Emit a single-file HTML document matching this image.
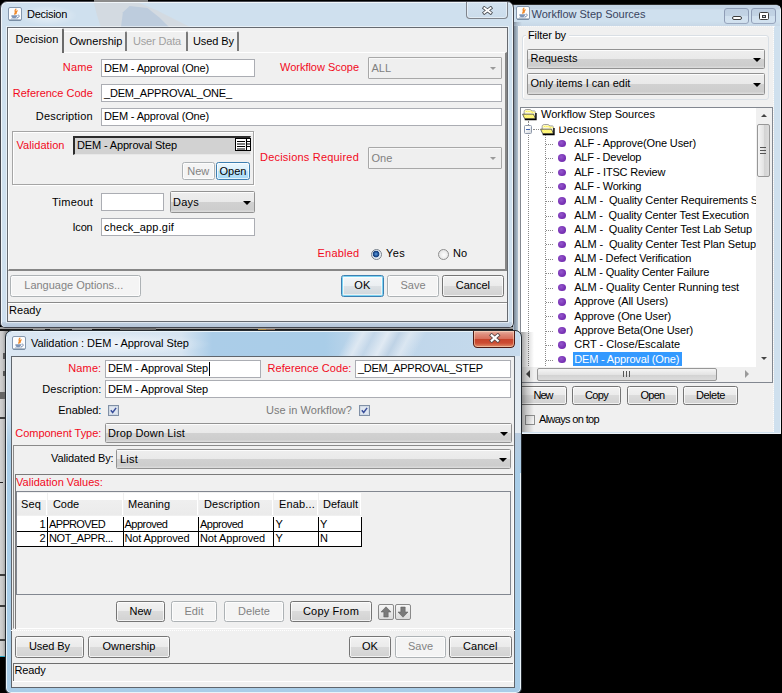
<!DOCTYPE html>
<html lang="en"><head><meta charset="utf-8"><title>Decision</title>
<style>
html,body{margin:0;padding:0}
body{width:782px;height:693px;background:#000;position:relative;overflow:hidden;font-family:"Liberation Sans",sans-serif;font-size:11px}
div,span.t,svg.a{position:absolute}
span.t{white-space:pre}
.btn{box-sizing:border-box;border:1px solid #757575;border-radius:2.5px;background:linear-gradient(#f2f2f2 0,#ebebeb 48%,#dbdbdb 50%,#d2d2d2 100%);box-shadow:inset 0 0 0 1px rgba(255,255,255,.7)}
.btn.cmb{border-color:#929292;border-radius:1.5px;background:linear-gradient(#eeeeee 0,#e9e9e9 48%,#d1d1d1 50%,#cdcdcd 88%,#dedede 100%);box-shadow:inset 0 1px 0 rgba(255,255,255,.8)}
.btn.dis{border-color:#adb2b5;background:#f4f4f4;box-shadow:inset 0 0 0 1px #fcfcfc}
.btn.cdis{border-color:#a8a8a8;border-radius:1px;background:#efefef;box-shadow:inset 1px 1px 0 #f8f8f8}
.btn.def{border-color:#3c7fb1;background:linear-gradient(#f3f6f8 0,#ebeff2 48%,#dde2e6 50%,#cfd6db 100%);box-shadow:inset 0 0 0 1px #7ed4f3,inset 0 0 0 2px rgba(255,255,255,.6)}
.btn.hot{border-color:#3c7fb1;background:linear-gradient(#eaf6fd 0,#d9f0fc 48%,#bee6fd 50%,#a7d9f5 100%);box-shadow:inset 0 0 0 1px rgba(255,255,255,.7)}
.arr{width:0;height:0;border-style:solid;border-width:4px 4px 0 4px;border-color:#000 transparent transparent transparent}
.thumbv{box-sizing:border-box;border:1px solid #979797;border-radius:2px;background:linear-gradient(90deg,#f5f5f5,#e4e4e4 50%,#d2d2d2 52%,#dcdcdc)}
.thumbh{box-sizing:border-box;border:1px solid #979797;border-radius:2px;background:linear-gradient(#f5f5f5,#e4e4e4 50%,#d2d2d2 52%,#dcdcdc)}
</style></head>
<body>
<div style="left:0px;top:329px;width:8px;height:328px;background:linear-gradient(90deg,#d2d2d2 0,#c6c6c6 35%,#9c9c9c 70%,#8a8a8a 100%);"></div>
<div style="left:0px;top:417px;width:6px;height:1.5px;background:#3c3c3c;"></div>
<div style="left:0px;top:574px;width:6px;height:1.5px;background:#3c3c3c;"></div>
<div style="left:0px;top:605px;width:6px;height:1.5px;background:#3c3c3c;"></div>
<div style="left:0px;top:639px;width:6px;height:1.5px;background:#3c3c3c;"></div>
<div style="left:0px;top:481.5px;width:2.5px;height:1.5px;background:#222;"></div>
<div style="left:3px;top:353px;width:2px;height:6px;background:#555;"></div>
<div style="left:2.5px;top:371px;width:2.5px;height:5px;background:#555;"></div>
<div style="left:0px;top:392px;width:5px;height:7px;background:#666;"></div>
<div style="left:0px;top:655.5px;width:6px;height:1.8px;background:#2aa6c4;"></div>
<div style="left:0px;top:327px;width:521px;height:2px;background:#9c9c9c;"></div>
<div style="left:0px;top:329px;width:521px;height:2px;background:#161616;"></div>
<div style="left:33px;top:329px;width:12px;height:2px;background:#8a8a8a;"></div>
<div style="left:50px;top:329px;width:10px;height:2px;background:#777;"></div>
<div style="left:72px;top:329px;width:20px;height:2px;background:#8a8a8a;"></div>
<div style="left:120px;top:328px;width:36px;height:3px;background:#6e6e6e;"></div>
<div style="left:258px;top:328.5px;width:8px;height:2px;background:#b08a3c;"></div>
<div style="left:266px;top:328.5px;width:9px;height:2px;background:#8a6a50;"></div>
<div style="left:473px;top:329px;width:48px;height:2px;background:#161616;"></div>
<div style="left:513px;top:4px;width:268px;height:430px;background:#cfe0ee;border:1px solid #eef3f8;border-top-color:#2a2a2a;border-left-color:#a9b9cb;border-radius:2px 6px 1px 1px;box-sizing:border-box;"></div>
<div style="left:514px;top:5px;width:266px;height:4px;background:#c3d3e4;border-radius:1px 5px 0 0;"></div>
<div style="left:514px;top:9px;width:266px;height:1px;background:#cbdaea;"></div>
<svg class="a" style="left:516px;top:5.5px" width="14" height="14" viewBox="0 0 14 14"><rect x=".5" y=".5" width="13" height="13" rx="1.500" fill="#fcfdfe" stroke="#8598ae"/><path d="M1.200 13h11.600" stroke="#6f839b" stroke-width="1"/><path d="M7.900 2.200c-2.300 1.500.9 2.600-1.300 4.900M9.200 3.900c-1.700.8-.2 1.700-1.500 3" stroke="#f08a2c" stroke-width="1.300" fill="none" stroke-linecap="round"/><path d="M3.300 8.200h5.800c0 2-.9 3-2.900 3s-2.900-1-2.900-3z" fill="#7d94b5"/><path d="M9.500 8.300c1.600-.6 2.400.6 1.400 1.600-.5.500-1.200.8-1.900.9" stroke="#7088ab" stroke-width=".9" fill="none"/><path d="M3 11.900h6.600" stroke="#93a6c0" stroke-width=".8"/></svg>
<span class="t" style="left:531.50px;top:8.99px;font-size:11px;line-height:11px;color:#39445e;letter-spacing:-0.008px;">Workflow Step Sources</span>
<div style="left:724px;top:8px;width:25px;height:16px;background:linear-gradient(#bfd0e2 0,#c2d3e4 48%,#d0e0ee 50%,#d3e2f0);border:1px solid #8f9db6;border-radius:3px;box-sizing:border-box;"></div>
<div style="left:751px;top:8px;width:25px;height:16px;background:linear-gradient(#bfd0e2 0,#c2d3e4 48%,#d0e0ee 50%,#d3e2f0);border:1px solid #8f9db6;border-radius:3px;box-sizing:border-box;"></div>
<div style="left:732px;top:16px;width:10px;height:4px;background:#fff;border:1px solid #3c3c3c;box-sizing:border-box;border-radius:2px;"></div>
<div style="left:759px;top:12px;width:10px;height:8px;background:#fff;border:1px solid #3c3c3c;box-sizing:border-box;border-radius:1.5px;"></div>
<div style="left:762px;top:15px;width:4px;height:3px;background:#c8d4e0;border:1px solid #3c3c3c;box-sizing:border-box;"></div>
<div style="left:514px;top:22px;width:8px;height:410px;background:linear-gradient(90deg,rgba(40,50,65,.5),rgba(40,50,65,.22) 40%,rgba(40,50,65,0));"></div>
<div style="left:518px;top:26px;width:255.5px;height:406px;background:#f0f0f0;border-right:1px dotted rgba(255,255,255,.8);box-sizing:border-box;"></div>
<div style="left:518px;top:26px;width:256.5px;height:1px;border-top:1px dotted rgba(255,255,255,.6);"></div>
<div style="left:514px;top:21px;width:266px;height:5px;background:linear-gradient(rgba(190,205,222,0),rgba(190,205,222,.45));"></div>
<div style="left:522px;top:35px;width:247px;height:65px;border:1px solid #d9dfe5;border-radius:3px;box-sizing:border-box;box-shadow:inset 1px 1px 0 #fff;"></div>
<div style="left:526px;top:31px;width:43px;height:10px;background:#f0f0f0;"></div>
<span class="t" style="left:528.00px;top:29.89px;font-size:11px;line-height:11px;color:#000;letter-spacing:-0.125px;">Filter by</span>
<div class="btn cmb" style="left:527px;top:48.5px;width:238px;height:20.5px;"></div>
<span class="t" style="left:530.50px;top:53.34px;font-size:11px;line-height:11px;color:#000;letter-spacing:0.062px;">Requests</span>
<div class="arr" style="left:752.5px;top:57.5px;border-width:4.500px 4px 0 4px;border-top-color:#000"></div>
<div class="btn cmb" style="left:527px;top:73px;width:238px;height:21.5px;"></div>
<span class="t" style="left:530.50px;top:78.34px;font-size:11px;line-height:11px;color:#000;letter-spacing:0.013px;">Only items I can edit</span>
<div class="arr" style="left:752.5px;top:82.5px;border-width:4.500px 4px 0 4px;border-top-color:#000"></div>
<div style="left:520px;top:106.5px;width:253px;height:276px;background:#fff;border:1px solid #828790;box-sizing:border-box;"></div>
<svg class="a" style="left:0;top:0" width="0" height="0"><defs><pattern id="dth" width="2" height="2" patternUnits="userSpaceOnUse"><rect width="2" height="2" fill="#fffef0"/><rect width="1" height="1" fill="#ffee00"/><rect x="1" y="1" width="1" height="1" fill="#ffee00"/></pattern></defs></svg>
<svg class="a" style="left:522.2px;top:109.2px" width="15" height="12.400" viewBox="0 0 16 13"><path d="M2.300 5V2.600C2.300 1.300 3.200.500 4.600.500h3.800c1 0 1.300.700 2 1.500h2.500c1 0 1.400.600 1.400 1.500v6.500H4z" fill="#fffde6" stroke="#7a7a7a" stroke-width=".8"/><path d="M3 2.500h6.500l1 1.200h3" fill="none" stroke="url(#dth)" stroke-width="1.600"/><path d="M.600 5.400h11.700l2 4.900H2.900z" fill="url(#dth)" stroke="#3a3a3a" stroke-width=".8"/><path d="M2.900 11.100h12V4.200" stroke="#000" stroke-width="1.500" fill="none"/></svg>
<span class="t" style="left:541.00px;top:109.09px;font-size:11px;line-height:11px;color:#000;letter-spacing:-0.008px;">Workflow Step Sources</span>
<div style="left:528px;top:121px;width:1px;height:4px;border-left:1px dotted #8a8a8a;"></div>
<div style="left:528px;top:133px;width:1px;height:233px;border-left:1px dotted #8a8a8a;"></div>
<div style="left:524.2px;top:125px;width:7.6px;height:8.6px;background:linear-gradient(135deg,#fff 30%,#d4d8de);border:1px solid #8e98aa;box-sizing:border-box;border-radius:1.5px;"></div>
<div style="left:526px;top:128.9px;width:4px;height:1px;background:#4466b4;"></div>
<div style="left:533px;top:129px;width:6px;height:1px;border-top:1px dotted #8a8a8a;"></div>
<svg class="a" style="left:539.6px;top:123.6px" width="15" height="12.400" viewBox="0 0 16 13"><path d="M2.300 5V2.600C2.300 1.300 3.200.500 4.600.500h3.800c1 0 1.300.700 2 1.500h2.500c1 0 1.400.600 1.400 1.500v6.500H4z" fill="#fffde6" stroke="#7a7a7a" stroke-width=".8"/><path d="M3 2.500h6.500l1 1.200h3" fill="none" stroke="url(#dth)" stroke-width="1.600"/><path d="M.600 5.400h11.700l2 4.900H2.900z" fill="url(#dth)" stroke="#3a3a3a" stroke-width=".8"/><path d="M2.900 11.100h12V4.200" stroke="#000" stroke-width="1.500" fill="none"/></svg>
<span class="t" style="left:558.60px;top:123.89px;font-size:11px;line-height:11px;color:#000;letter-spacing:0.201px;clip-path:inset(2.500px 0 0 0);">Decisions</span>
<div style="left:545px;top:135px;width:1px;height:231px;border-left:1px dotted #8a8a8a;"></div>
<div style="left:546px;top:144px;width:7px;height:1px;border-top:1px dotted #8a8a8a;"></div>
<div style="left:558.3px;top:139.79999999999998px;width:8px;height:7.4px;background:radial-gradient(circle at 40% 38%,#9458cc,#7a34b6 55%,#6a2aa4);border-radius:50%;"></div>
<span class="t" style="left:574.20px;top:137.89px;font-size:11px;line-height:11px;color:#000;letter-spacing:-0.120px;">ALF - Approve(One User)</span>
<div style="left:546px;top:158px;width:7px;height:1px;border-top:1px dotted #8a8a8a;"></div>
<div style="left:558.3px;top:154.2px;width:8px;height:7.4px;background:radial-gradient(circle at 40% 38%,#9458cc,#7a34b6 55%,#6a2aa4);border-radius:50%;"></div>
<span class="t" style="left:574.20px;top:152.29px;font-size:11px;line-height:11px;color:#000;letter-spacing:-0.257px;">ALF - Develop</span>
<div style="left:546px;top:172px;width:7px;height:1px;border-top:1px dotted #8a8a8a;"></div>
<div style="left:558.3px;top:168.6px;width:8px;height:7.4px;background:radial-gradient(circle at 40% 38%,#9458cc,#7a34b6 55%,#6a2aa4);border-radius:50%;"></div>
<span class="t" style="left:574.20px;top:166.69px;font-size:11px;line-height:11px;color:#000;letter-spacing:-0.186px;">ALF - ITSC Review</span>
<div style="left:546px;top:187px;width:7px;height:1px;border-top:1px dotted #8a8a8a;"></div>
<div style="left:558.3px;top:183.0px;width:8px;height:7.4px;background:radial-gradient(circle at 40% 38%,#9458cc,#7a34b6 55%,#6a2aa4);border-radius:50%;"></div>
<span class="t" style="left:574.20px;top:181.09px;font-size:11px;line-height:11px;color:#000;letter-spacing:-0.239px;">ALF - Working</span>
<div style="left:546px;top:201px;width:7px;height:1px;border-top:1px dotted #8a8a8a;"></div>
<div style="left:558.3px;top:197.39999999999998px;width:8px;height:7.4px;background:radial-gradient(circle at 40% 38%,#9458cc,#7a34b6 55%,#6a2aa4);border-radius:50%;"></div>
<span class="t" style="left:574.20px;top:195.49px;font-size:11px;line-height:11px;color:#000;letter-spacing:-0.105px;">ALM -  Quality Center Requirements S</span>
<div style="left:546px;top:216px;width:7px;height:1px;border-top:1px dotted #8a8a8a;"></div>
<div style="left:558.3px;top:211.79999999999998px;width:8px;height:7.4px;background:radial-gradient(circle at 40% 38%,#9458cc,#7a34b6 55%,#6a2aa4);border-radius:50%;"></div>
<span class="t" style="left:574.20px;top:209.89px;font-size:11px;line-height:11px;color:#000;letter-spacing:-0.146px;">ALM -  Quality Center Test Execution</span>
<div style="left:546px;top:230px;width:7px;height:1px;border-top:1px dotted #8a8a8a;"></div>
<div style="left:558.3px;top:226.2px;width:8px;height:7.4px;background:radial-gradient(circle at 40% 38%,#9458cc,#7a34b6 55%,#6a2aa4);border-radius:50%;"></div>
<span class="t" style="left:574.20px;top:224.29px;font-size:11px;line-height:11px;color:#000;letter-spacing:-0.115px;">ALM -  Quality Center Test Lab Setup</span>
<div style="left:546px;top:244px;width:7px;height:1px;border-top:1px dotted #8a8a8a;"></div>
<div style="left:558.3px;top:240.59999999999997px;width:8px;height:7.4px;background:radial-gradient(circle at 40% 38%,#9458cc,#7a34b6 55%,#6a2aa4);border-radius:50%;"></div>
<span class="t" style="left:574.20px;top:238.69px;font-size:11px;line-height:11px;color:#000;letter-spacing:-0.103px;">ALM -  Quality Center Test Plan Setup</span>
<div style="left:546px;top:259px;width:7px;height:1px;border-top:1px dotted #8a8a8a;"></div>
<div style="left:558.3px;top:255.0px;width:8px;height:7.4px;background:radial-gradient(circle at 40% 38%,#9458cc,#7a34b6 55%,#6a2aa4);border-radius:50%;"></div>
<span class="t" style="left:574.20px;top:253.09px;font-size:11px;line-height:11px;color:#000;letter-spacing:-0.164px;">ALM - Defect Verification</span>
<div style="left:546px;top:273px;width:7px;height:1px;border-top:1px dotted #8a8a8a;"></div>
<div style="left:558.3px;top:269.4px;width:8px;height:7.4px;background:radial-gradient(circle at 40% 38%,#9458cc,#7a34b6 55%,#6a2aa4);border-radius:50%;"></div>
<span class="t" style="left:574.20px;top:267.49px;font-size:11px;line-height:11px;color:#000;letter-spacing:-0.158px;">ALM - Quality Center Failure</span>
<div style="left:546px;top:288px;width:7px;height:1px;border-top:1px dotted #8a8a8a;"></div>
<div style="left:558.3px;top:283.8px;width:8px;height:7.4px;background:radial-gradient(circle at 40% 38%,#9458cc,#7a34b6 55%,#6a2aa4);border-radius:50%;"></div>
<span class="t" style="left:574.20px;top:281.89px;font-size:11px;line-height:11px;color:#000;letter-spacing:-0.080px;">ALM - Quality Center Running test</span>
<div style="left:546px;top:302px;width:7px;height:1px;border-top:1px dotted #8a8a8a;"></div>
<div style="left:558.3px;top:298.2px;width:8px;height:7.4px;background:radial-gradient(circle at 40% 38%,#9458cc,#7a34b6 55%,#6a2aa4);border-radius:50%;"></div>
<span class="t" style="left:574.20px;top:296.29px;font-size:11px;line-height:11px;color:#000;letter-spacing:-0.072px;">Approve (All Users)</span>
<div style="left:546px;top:316px;width:7px;height:1px;border-top:1px dotted #8a8a8a;"></div>
<div style="left:558.3px;top:312.59999999999997px;width:8px;height:7.4px;background:radial-gradient(circle at 40% 38%,#9458cc,#7a34b6 55%,#6a2aa4);border-radius:50%;"></div>
<span class="t" style="left:574.20px;top:310.69px;font-size:11px;line-height:11px;color:#000;letter-spacing:-0.082px;">Approve (One User)</span>
<div style="left:546px;top:331px;width:7px;height:1px;border-top:1px dotted #8a8a8a;"></div>
<div style="left:558.3px;top:327.0px;width:8px;height:7.4px;background:radial-gradient(circle at 40% 38%,#9458cc,#7a34b6 55%,#6a2aa4);border-radius:50%;"></div>
<span class="t" style="left:574.20px;top:325.09px;font-size:11px;line-height:11px;color:#000;letter-spacing:-0.097px;">Approve Beta(One User)</span>
<div style="left:546px;top:345px;width:7px;height:1px;border-top:1px dotted #8a8a8a;"></div>
<div style="left:558.3px;top:341.4px;width:8px;height:7.4px;background:radial-gradient(circle at 40% 38%,#9458cc,#7a34b6 55%,#6a2aa4);border-radius:50%;"></div>
<span class="t" style="left:574.20px;top:339.49px;font-size:11px;line-height:11px;color:#000;letter-spacing:0.031px;">CRT - Close/Escalate</span>
<div style="left:546px;top:360px;width:7px;height:1px;border-top:1px dotted #8a8a8a;"></div>
<div style="left:558.3px;top:355.8px;width:8px;height:7.4px;background:radial-gradient(circle at 40% 38%,#9458cc,#7a34b6 55%,#6a2aa4);border-radius:50%;"></div>
<div style="left:572.5px;top:352.1px;width:109.5px;height:14.4px;background:#3399ff;"></div>
<span class="t" style="left:574.20px;top:353.89px;font-size:11px;line-height:11px;color:#fff;letter-spacing:-0.162px;">DEM - Approval (One)</span>
<div style="left:756px;top:107.5px;width:16px;height:259px;background:#f0f0f0;"></div>
<div class="thumbv" style="left:756.5px;top:124px;width:13.5px;height:53px;"></div>
<div style="left:760px;top:147px;width:6px;height:1px;background:#555;"></div>
<div style="left:760px;top:150px;width:6px;height:1px;background:#555;"></div>
<div style="left:760px;top:153px;width:6px;height:1px;background:#555;"></div>
<div class="arr" style="left:760.5px;top:114px;border-width:0 3px 3px 3px;border-color:transparent transparent #444 transparent"></div>
<div class="arr" style="left:760.5px;top:357px;border-width:3px 3px 0 3px;border-color:#444 transparent transparent transparent"></div>
<div style="left:521px;top:367px;width:235px;height:14.5px;background:#f0f0f0;"></div>
<div style="left:756px;top:367px;width:16px;height:14.5px;background:#f0f0f0;"></div>
<div class="thumbh" style="left:537px;top:367.5px;width:180px;height:13.5px;"></div>
<div style="left:623px;top:371px;width:1px;height:6px;background:#555;"></div>
<div style="left:626px;top:371px;width:1px;height:6px;background:#555;"></div>
<div style="left:629px;top:371px;width:1px;height:6px;background:#555;"></div>
<div class="arr" style="left:526px;top:370px;border-width:4px 4px 4px 0;border-color:transparent #444 transparent transparent"></div>
<div class="arr" style="left:745px;top:370px;border-width:4px 0 4px 4px;border-color:transparent transparent transparent #9a9a9a"></div>
<div class="btn" style="left:519px;top:386px;width:48px;height:19px;"></div>
<span class="t" style="left:533.50px;top:389.89px;font-size:11px;line-height:11px;color:#000;letter-spacing:-1.000px;">New</span>
<div class="btn" style="left:572px;top:386px;width:49px;height:19px;"></div>
<span class="t" style="left:585.00px;top:389.89px;font-size:11px;line-height:11px;color:#000;letter-spacing:-0.672px;">Copy</span>
<div class="btn" style="left:627px;top:386px;width:51px;height:19px;"></div>
<span class="t" style="left:640.50px;top:389.89px;font-size:11px;line-height:11px;color:#000;letter-spacing:-0.734px;">Open</span>
<div class="btn" style="left:683px;top:386px;width:55px;height:19px;"></div>
<span class="t" style="left:696.00px;top:389.89px;font-size:11px;line-height:11px;color:#000;letter-spacing:-0.469px;">Delete</span>
<div style="left:524.5px;top:414.5px;width:10px;height:10px;background:linear-gradient(135deg,#e4e4e4,#fafafa);border:1px solid #8e8f8f;box-sizing:border-box;"></div>
<span class="t" style="left:539.00px;top:413.69px;font-size:11px;line-height:11px;color:#000;letter-spacing:-0.656px;">Always on top</span>
<div style="left:521px;top:332px;width:13px;height:100px;background:linear-gradient(90deg,rgba(0,0,0,.38),rgba(0,0,0,.16) 45%,rgba(0,0,0,0));"></div>
<div style="left:0px;top:1px;width:514px;height:327px;background:#cfe0ee;border:1px solid #44464e;border-radius:7px 7px 5px 5px;box-sizing:border-box;box-shadow:inset 0 0 0 1px rgba(255,255,255,.7);"></div>
<div style="left:2px;top:322px;width:510px;height:4.5px;background:linear-gradient(#c2d2e3,#b4c4d7);border-radius:0 0 4px 4px;"></div>
<div style="left:92px;top:3px;width:98px;height:24px;background:#d3d9df;clip-path:polygon(2% 0,48% 0,66% 30%,100% 100%,9% 100%,5% 50%);opacity:.9;"></div>
<div style="left:121px;top:6px;width:48px;height:21px;background:#bdccdd;clip-path:polygon(18% 0,55% 10%,80% 55%,100% 100%,0 100%,4% 30%);"></div>
<div style="left:20px;top:6px;width:56px;height:19px;background:radial-gradient(ellipse at center,rgba(255,255,255,.55),rgba(255,255,255,0) 75%);"></div>
<div style="left:94px;top:0px;width:54px;height:2px;background:#8c8c8c;"></div>
<svg class="a" style="left:8px;top:7px" width="14" height="14" viewBox="0 0 14 14"><rect x=".5" y=".5" width="13" height="13" rx="1.500" fill="#fcfdfe" stroke="#8598ae"/><path d="M1.200 13h11.600" stroke="#6f839b" stroke-width="1"/><path d="M7.900 2.200c-2.300 1.500.9 2.600-1.300 4.900M9.200 3.900c-1.700.8-.2 1.700-1.500 3" stroke="#f08a2c" stroke-width="1.300" fill="none" stroke-linecap="round"/><path d="M3.300 8.200h5.800c0 2-.9 3-2.900 3s-2.900-1-2.900-3z" fill="#7d94b5"/><path d="M9.500 8.300c1.600-.6 2.400.6 1.400 1.600-.5.500-1.200.8-1.900.9" stroke="#7088ab" stroke-width=".9" fill="none"/><path d="M3 11.900h6.600" stroke="#93a6c0" stroke-width=".8"/></svg>
<span class="t" style="left:27.00px;top:9.29px;font-size:11px;line-height:11px;color:#000;letter-spacing:-0.273px;">Decision</span>
<div style="left:466px;top:2px;width:42px;height:17px;background:linear-gradient(#d3e2f0,#cbdceb);border:1px solid #7f848c;border-top:none;border-radius:0 0 4px 4px;box-sizing:border-box;box-shadow:inset 0 0 0 1px rgba(255,255,255,.45);"></div>
<svg class="a" style="left:482.400px;top:5.900px" width="11" height="8.800" viewBox="0 0 12 9.600"><path d="M2.600 2.200l6.800 5.200M9.400 2.200l-6.800 5.200" stroke="#4c5057" stroke-width="3.800" stroke-linecap="square"/><path d="M2.600 2.200l6.800 5.200M9.400 2.200l-6.800 5.200" stroke="#fff" stroke-width="2" stroke-linecap="square"/></svg>
<div style="left:7px;top:27px;width:501px;height:295px;background:#f0f0f0;border:1px solid #666a70;box-sizing:border-box;box-shadow:0 0 0 1px rgba(255,255,255,.5);"></div>
<div style="left:8px;top:52px;width:499px;height:219px;border-top:1px solid #fff;border-left:1px solid #fff;border-right:2px solid #868686;border-bottom:2px solid #868686;box-sizing:border-box;"></div>
<div style="left:8px;top:28px;width:56px;height:25px;background:#f0f0f0;border-top:1px solid #fff;border-left:1px solid #fff;border-right:2px solid #6a6a6a;box-sizing:border-box;border-radius:2px 2px 0 0;"></div>
<div style="left:64px;top:31px;width:63px;height:20px;border-top:1px solid #fff;border-right:2px solid #7a7a7a;box-sizing:border-box;border-radius:0 2px 0 0;"></div>
<div style="left:127px;top:31px;width:61px;height:20px;border-top:1px solid #fff;border-right:2px solid #7a7a7a;box-sizing:border-box;border-radius:0 2px 0 0;"></div>
<div style="left:188px;top:31px;width:51px;height:20px;border-top:1px solid #fff;border-right:2px solid #7a7a7a;box-sizing:border-box;border-radius:0 2px 0 0;"></div>
<span class="t" style="left:15.50px;top:34.49px;font-size:11px;line-height:11px;color:#000;letter-spacing:0.102px;">Decision</span>
<span class="t" style="left:69.50px;top:35.69px;font-size:11px;line-height:11px;color:#000;letter-spacing:0.045px;">Ownership</span>
<span class="t" style="left:133.00px;top:35.69px;font-size:11px;line-height:11px;color:#a0a0a0;letter-spacing:-0.170px;">User Data</span>
<span class="t" style="left:193.00px;top:35.69px;font-size:11px;line-height:11px;color:#000;letter-spacing:-0.085px;">Used By</span>
<span class="t" style="left:62.80px;top:62.39px;font-size:11px;line-height:11px;color:#f20a1c;letter-spacing:0.164px;">Name</span>
<div style="left:101px;top:59px;width:154px;height:18px;background:#fff;border:1px solid #abadb3;box-sizing:border-box;"></div>
<span class="t" style="left:104.00px;top:62.59px;font-size:11px;line-height:11px;color:#000;letter-spacing:-0.162px;">DEM - Approval (One)</span>
<span class="t" style="left:280.00px;top:62.39px;font-size:11px;line-height:11px;color:#f20a1c;letter-spacing:-0.021px;">Workflow Scope</span>
<div class="btn cdis" style="left:368px;top:57px;width:134px;height:22px;"></div>
<span class="t" style="left:371.50px;top:62.59px;font-size:11px;line-height:11px;color:#808080;">ALL</span>
<div class="arr" style="left:489.5px;top:66.7px;border-width:3px 3px 0 3px;border-top-color:#9a9a9a"></div>
<span class="t" style="left:12.80px;top:87.69px;font-size:11px;line-height:11px;color:#f20a1c;letter-spacing:-0.011px;">Reference Code</span>
<div style="left:101px;top:84px;width:401px;height:18px;background:#fff;border:1px solid #abadb3;box-sizing:border-box;"></div>
<span class="t" style="left:104.00px;top:87.59px;font-size:11px;line-height:11px;color:#000;letter-spacing:-0.184px;">_DEM_APPROVAL_ONE_</span>
<span class="t" style="left:35.80px;top:110.89px;font-size:11px;line-height:11px;color:#000;letter-spacing:0.179px;">Description</span>
<div style="left:101px;top:107.5px;width:401px;height:18.5px;background:#fff;border:1px solid #abadb3;box-sizing:border-box;"></div>
<span class="t" style="left:104.00px;top:110.89px;font-size:11px;line-height:11px;color:#000;letter-spacing:-0.162px;">DEM - Approval (One)</span>
<div style="left:12px;top:131px;width:242px;height:54px;border:1px solid #a5a5a5;box-sizing:border-box;box-shadow:1px 1px 0 #fff, inset 1px 1px 0 #fff;"></div>
<span class="t" style="left:16.50px;top:139.69px;font-size:11px;line-height:11px;color:#f20a1c;letter-spacing:0.047px;">Validation</span>
<div style="left:73px;top:136px;width:178px;height:18.8px;background:#d2d2d2;border-top:2px solid #2c2c2c;border-left:2px solid #2c2c2c;border-bottom:1px solid #e8e8e8;border-right:1px solid #e8e8e8;box-sizing:border-box;"></div>
<span class="t" style="left:77.00px;top:139.69px;font-size:11px;line-height:11px;color:#000;letter-spacing:-0.146px;">DEM - Approval Step</span>
<svg class="a" style="left:235px;top:138px" width="16" height="13" viewBox="0 0 16 13"><rect x=".5" y=".5" width="15" height="12" fill="#fff" stroke="#000"/><path d="M2 3.5h8M2 6h8M2 8.5h8M2 11h8M11.5 1v11M12 3.5h3M12 6h3M12 8.5h3" stroke="#000" stroke-width="1.1"/></svg>
<div class="btn dis" style="left:181.5px;top:162px;width:33.5px;height:18px;"></div>
<span class="t" style="left:187.25px;top:165.59px;font-size:11px;line-height:11px;color:#838383;">New</span>
<div class="btn hot" style="left:216px;top:162px;width:34px;height:18px;"></div>
<span class="t" style="left:219.53px;top:165.59px;font-size:11px;line-height:11px;color:#000;">Open</span>
<span class="t" style="left:260.00px;top:152.19px;font-size:11px;line-height:11px;color:#f20a1c;letter-spacing:0.200px;">Decisions Required</span>
<div class="btn cdis" style="left:368px;top:147px;width:134px;height:22px;"></div>
<span class="t" style="left:371.50px;top:152.59px;font-size:11px;line-height:11px;color:#808080;">One</span>
<div class="arr" style="left:489.5px;top:156.7px;border-width:3px 3px 0 3px;border-top-color:#9a9a9a"></div>
<span class="t" style="left:52.00px;top:196.89px;font-size:11px;line-height:11px;color:#000;letter-spacing:0.237px;">Timeout</span>
<div style="left:101px;top:193px;width:63px;height:18px;background:#fff;border:1px solid #abadb3;box-sizing:border-box;"></div>
<div class="btn cmb" style="left:170px;top:191px;width:85px;height:22px;"></div>
<span class="t" style="left:173.00px;top:196.59px;font-size:11px;line-height:11px;color:#000;letter-spacing:0.234px;">Days</span>
<div class="arr" style="left:242.5px;top:200.7px;border-width:4.500px 4px 0 4px;border-top-color:#000"></div>
<span class="t" style="left:72.50px;top:221.89px;font-size:11px;line-height:11px;color:#000;letter-spacing:-0.203px;">Icon</span>
<div style="left:101px;top:218px;width:154px;height:18px;background:#fff;border:1px solid #abadb3;box-sizing:border-box;"></div>
<span class="t" style="left:104.00px;top:221.59px;font-size:11px;line-height:11px;color:#000;letter-spacing:0.159px;">check_app.gif</span>
<span class="t" style="left:317.50px;top:247.69px;font-size:11px;line-height:11px;color:#f20a1c;letter-spacing:0.228px;">Enabled</span>
<div style="left:371px;top:249px;width:11px;height:11px;border-radius:50%;background:radial-gradient(circle at 45% 45%,#5fa0e0 0,#1d4f94 30%,#173f7c 42%,#d5e2ee 52%,#eef2f6 70%);border:1px solid #77808a;box-sizing:border-box;"></div>
<span class="t" style="left:386.00px;top:247.69px;font-size:11px;line-height:11px;color:#000;letter-spacing:0.349px;">Yes</span>
<div style="left:438px;top:249px;width:11px;height:11px;border-radius:50%;background:radial-gradient(circle at 55% 55%,#fdfdfd,#dadada);border:1px solid #8e8e8e;box-sizing:border-box;"></div>
<span class="t" style="left:453.00px;top:247.69px;font-size:11px;line-height:11px;color:#000;letter-spacing:-0.031px;">No</span>
<div class="btn dis" style="left:10px;top:275px;width:131px;height:22px;"></div>
<span class="t" style="left:24.30px;top:279.79px;font-size:11px;line-height:11px;color:#838383;letter-spacing:-0.010px;">Language Options...</span>
<div class="btn def" style="left:340.8px;top:275px;width:43px;height:22px;"></div>
<span class="t" style="left:354.35px;top:279.79px;font-size:11px;line-height:11px;color:#000;">OK</span>
<div class="btn dis" style="left:387px;top:275px;width:52px;height:22px;"></div>
<span class="t" style="left:400.45px;top:279.79px;font-size:11px;line-height:11px;color:#838383;">Save</span>
<div class="btn" style="left:441.7px;top:275px;width:62.3px;height:22px;"></div>
<span class="t" style="left:455.72px;top:279.79px;font-size:11px;line-height:11px;color:#000;">Cancel</span>
<div style="left:8px;top:302px;width:499px;height:1px;background:#8a8a8a;"></div>
<div style="left:8px;top:303px;width:499px;height:1px;background:#fff;"></div>
<span class="t" style="left:9.00px;top:304.99px;font-size:11px;line-height:11px;color:#000;letter-spacing:0.037px;">Ready</span>
<div style="left:5px;top:330px;width:517px;height:364px;background:#a9cde8;border:1px solid #252b31;border-radius:7px 7px 6px 6px;box-sizing:border-box;box-shadow:inset 0 0 0 1px rgba(255,255,255,.75);"></div>
<div style="left:7px;top:332px;width:513px;height:24px;background:linear-gradient(90deg,#dbe7f3 0,#d6e4f1 34%,#abcde8 40%,#a9cde8 62%,#bdd5ea 68%,#c6daec 100%);border-radius:5px 5px 0 0;"></div>
<div style="left:330px;top:332px;width:100px;height:24px;background:linear-gradient(118deg,rgba(255,255,255,0) 18%,rgba(225,234,243,.9) 30%,rgba(200,216,232,.5) 40%,rgba(228,236,244,.9) 52%,rgba(190,208,226,.6) 62%,rgba(225,234,243,.8) 72%,rgba(255,255,255,0) 86%);"></div>
<div style="left:20px;top:333px;width:190px;height:22px;background:radial-gradient(ellipse at center,rgba(255,255,255,.6),rgba(255,255,255,0) 72%);"></div>
<div style="left:515px;top:356px;width:6px;height:77px;background:linear-gradient(#dfe8f1,#e6edf3);"></div>
<div style="left:515px;top:433px;width:6px;height:40px;background:linear-gradient(#b9cbde,#a9cde8);"></div>
<div style="left:7px;top:356px;width:4px;height:90px;background:linear-gradient(#dbe7f2 0,#d6e3f0 55%,#a9cde8 100%);"></div>
<svg class="a" style="left:12.2px;top:336.2px" width="14" height="14" viewBox="0 0 14 14"><rect x=".5" y=".5" width="13" height="13" rx="1.500" fill="#fcfdfe" stroke="#8598ae"/><path d="M1.200 13h11.600" stroke="#6f839b" stroke-width="1"/><path d="M7.900 2.200c-2.300 1.500.9 2.600-1.300 4.900M9.200 3.900c-1.700.8-.2 1.700-1.500 3" stroke="#f08a2c" stroke-width="1.300" fill="none" stroke-linecap="round"/><path d="M3.300 8.200h5.800c0 2-.9 3-2.900 3s-2.900-1-2.900-3z" fill="#7d94b5"/><path d="M9.500 8.300c1.600-.6 2.400.6 1.400 1.600-.5.500-1.200.8-1.900.9" stroke="#7088ab" stroke-width=".9" fill="none"/><path d="M3 11.900h6.600" stroke="#93a6c0" stroke-width=".8"/></svg>
<span class="t" style="left:31.00px;top:337.69px;font-size:11px;line-height:11px;color:#000;letter-spacing:-0.046px;">Validation : DEM - Approval Step</span>
<div style="left:473px;top:331px;width:42px;height:17px;background:linear-gradient(#e8b0a2 0,#de8b7a 22%,#d8715e 47%,#c6432b 50%,#cc4c32 75%,#e08e6c 100%);border:1px solid #4e1a14;border-top:none;border-radius:0 0 4.500px 4.500px;box-sizing:border-box;box-shadow:inset 0 0 0 1px rgba(255,230,200,.5);"></div>
<svg class="a" style="left:489.400px;top:333.200px" width="11.500" height="10" viewBox="0 0 11.500 10"><path d="M2.700 2.300l6.100 5.400M8.800 2.300l-6.100 5.400" stroke="#5a4a4a" stroke-width="3.800" stroke-linecap="square"/><path d="M2.700 2.300l6.100 5.400M8.800 2.300l-6.100 5.400" stroke="#fff" stroke-width="2.100" stroke-linecap="square"/></svg>
<div style="left:11px;top:356px;width:504px;height:332px;background:#f0f0f0;border:1px solid #5f656c;box-sizing:border-box;"></div>
<span class="t" style="left:68.30px;top:363.29px;font-size:11px;line-height:11px;color:#f20a1c;letter-spacing:0.119px;">Name:</span>
<div style="left:105px;top:359.5px;width:156px;height:18px;background:#fff;border:1px solid #abadb3;box-sizing:border-box;"></div>
<span class="t" style="left:108.00px;top:363.29px;font-size:11px;line-height:11px;color:#000;letter-spacing:-0.146px;">DEM - Approval Step</span>
<div style="left:208.5px;top:361.5px;width:1px;height:14px;background:#000;"></div>
<span class="t" style="left:267.50px;top:363.29px;font-size:11px;line-height:11px;color:#f20a1c;letter-spacing:0.052px;">Reference Code:</span>
<div style="left:355px;top:359.5px;width:156px;height:18px;background:#fff;border:1px solid #abadb3;box-sizing:border-box;"></div>
<span class="t" style="left:358.00px;top:363.29px;font-size:11px;line-height:11px;color:#000;letter-spacing:-0.283px;">_DEM_APPROVAL_STEP</span>
<span class="t" style="left:42.30px;top:383.99px;font-size:11px;line-height:11px;color:#000;letter-spacing:0.076px;">Description:</span>
<div style="left:105px;top:380.3px;width:406px;height:17.5px;background:#fff;border:1px solid #abadb3;box-sizing:border-box;"></div>
<span class="t" style="left:108.00px;top:383.99px;font-size:11px;line-height:11px;color:#000;letter-spacing:-0.146px;">DEM - Approval Step</span>
<span class="t" style="left:58.30px;top:405.19px;font-size:11px;line-height:11px;color:#000;letter-spacing:-0.059px;">Enabled:</span>
<svg class="a" style="left:108px;top:404.5px" width="11" height="11" viewBox="0 0 11 11"><rect x=".5" y=".5" width="10" height="10" fill="#e9eef5" stroke="#8090a6"/><rect x="1.5" y="1.5" width="8" height="8" fill="#dfe6f0" stroke="#c5cfdc" stroke-width=".6"/><path d="M2.8 5.2l1.9 2.3 3.4-4.6" fill="none" stroke="#3a4f9a" stroke-width="1.5"/></svg>
<span class="t" style="left:266.00px;top:405.19px;font-size:11px;line-height:11px;color:#7a7a7a;letter-spacing:0.038px;">Use in Workflow?</span>
<svg class="a" style="left:358.8px;top:404.5px" width="11" height="11" viewBox="0 0 11 11"><rect x=".5" y=".5" width="10" height="10" fill="#e9eef5" stroke="#8090a6"/><rect x="1.5" y="1.5" width="8" height="8" fill="#dfe6f0" stroke="#c5cfdc" stroke-width=".6"/><path d="M2.8 5.2l1.9 2.3 3.4-4.6" fill="none" stroke="#3a4f9a" stroke-width="1.5"/></svg>
<span class="t" style="left:15.30px;top:427.89px;font-size:11px;line-height:11px;color:#f20a1c;letter-spacing:-0.046px;">Component Type:</span>
<div class="btn cmb" style="left:105px;top:423px;width:407px;height:20px;"></div>
<span class="t" style="left:108.00px;top:427.59px;font-size:11px;line-height:11px;color:#000;letter-spacing:0.127px;">Drop Down List</span>
<div class="arr" style="left:499.5px;top:431.7px;border-width:4.500px 4px 0 4px;border-top-color:#000"></div>
<div style="left:13px;top:445px;width:501px;height:184px;border-top:1px solid #8a8a8a;border-left:1px solid #8a8a8a;border-bottom:1px solid #fff;border-right:1px solid #fff;box-sizing:border-box;"></div>
<span class="t" style="left:51.00px;top:453.49px;font-size:11px;line-height:11px;color:#000;letter-spacing:-0.120px;">Validated By:</span>
<div class="btn cmb" style="left:116px;top:449px;width:395px;height:20px;"></div>
<span class="t" style="left:120.00px;top:453.59px;font-size:11px;line-height:11px;color:#000;letter-spacing:0.219px;">List</span>
<div class="arr" style="left:498.5px;top:457.7px;border-width:4.500px 4px 0 4px;border-top-color:#000"></div>
<div style="left:15px;top:473.5px;width:498px;height:1px;background:#7a7a7a;"></div>
<div style="left:15px;top:474.5px;width:1px;height:154px;background:#7a7a7a;"></div>
<span class="t" style="left:16.00px;top:476.69px;font-size:11px;line-height:11px;color:#f20a1c;letter-spacing:0.028px;">Validation Values:</span>
<div style="left:16px;top:491px;width:495px;height:104px;border:1px solid #828790;box-sizing:border-box;background:#f0f0f0;"></div>
<div style="left:17px;top:493px;width:30px;height:22px;background:linear-gradient(#fff 0,#fff 7px,#efefef 7px,#ebebeb);border-right:1px solid #fff;box-sizing:border-box;"></div>
<span class="t" style="left:21.00px;top:499.39px;font-size:11px;line-height:11px;color:#000;letter-spacing:0.135px;">Seq</span>
<div style="left:48px;top:493px;width:75px;height:22px;background:linear-gradient(#fff 0,#fff 7px,#efefef 7px,#ebebeb);border-right:1px solid #fff;box-sizing:border-box;"></div>
<span class="t" style="left:53.00px;top:499.39px;font-size:11px;line-height:11px;color:#000;letter-spacing:-0.078px;">Code</span>
<div style="left:124px;top:493px;width:74px;height:22px;background:linear-gradient(#fff 0,#fff 7px,#efefef 7px,#ebebeb);border-right:1px solid #fff;box-sizing:border-box;"></div>
<span class="t" style="left:128.00px;top:499.39px;font-size:11px;line-height:11px;color:#000;letter-spacing:-0.031px;">Meaning</span>
<div style="left:199px;top:493px;width:74px;height:22px;background:linear-gradient(#fff 0,#fff 7px,#efefef 7px,#ebebeb);border-right:1px solid #fff;box-sizing:border-box;"></div>
<span class="t" style="left:204.00px;top:499.39px;font-size:11px;line-height:11px;color:#000;letter-spacing:0.088px;">Description</span>
<div style="left:274px;top:493px;width:44px;height:22px;background:linear-gradient(#fff 0,#fff 7px,#efefef 7px,#ebebeb);border-right:1px solid #fff;box-sizing:border-box;"></div>
<span class="t" style="left:279.00px;top:499.39px;font-size:11px;line-height:11px;color:#000;letter-spacing:0.156px;">Enab...</span>
<div style="left:319px;top:493px;width:42px;height:22px;background:linear-gradient(#fff 0,#fff 7px,#efefef 7px,#ebebeb);border-right:1px solid #fff;box-sizing:border-box;"></div>
<span class="t" style="left:323.00px;top:499.39px;font-size:11px;line-height:11px;color:#000;letter-spacing:0.018px;">Default</span>
<div style="left:17px;top:516px;width:345px;height:31px;background:#fff;"></div>
<div style="left:17px;top:531px;width:345px;height:1px;background:#000;"></div>
<div style="left:17px;top:546px;width:345px;height:1px;background:#000;"></div>
<div style="left:47px;top:517px;width:1px;height:30px;background:#000;"></div>
<div style="left:123px;top:517px;width:1px;height:30px;background:#000;"></div>
<div style="left:198px;top:517px;width:1px;height:30px;background:#000;"></div>
<div style="left:273px;top:517px;width:1px;height:30px;background:#000;"></div>
<div style="left:318px;top:517px;width:1px;height:30px;background:#000;"></div>
<div style="left:361px;top:517px;width:1px;height:30px;background:#000;"></div>
<span class="t" style="left:39.38px;top:518.69px;font-size:11px;line-height:11px;color:#000;">1</span>
<span class="t" style="left:49.00px;top:518.69px;font-size:11px;line-height:11px;color:#000;letter-spacing:-0.645px;">APPROVED</span>
<span class="t" style="left:124.50px;top:518.69px;font-size:11px;line-height:11px;color:#000;letter-spacing:-0.516px;">Approved</span>
<span class="t" style="left:200.00px;top:518.69px;font-size:11px;line-height:11px;color:#000;letter-spacing:-0.516px;">Approved</span>
<span class="t" style="left:275.50px;top:518.69px;font-size:11px;line-height:11px;color:#000;">Y</span>
<span class="t" style="left:320.00px;top:518.69px;font-size:11px;line-height:11px;color:#000;">Y</span>
<span class="t" style="left:39.38px;top:533.19px;font-size:11px;line-height:11px;color:#000;">2</span>
<span class="t" style="left:49.00px;top:533.19px;font-size:11px;line-height:11px;color:#000;letter-spacing:-0.409px;">NOT_APPR...</span>
<span class="t" style="left:124.50px;top:533.19px;font-size:11px;line-height:11px;color:#000;letter-spacing:-0.142px;">Not Approved</span>
<span class="t" style="left:200.00px;top:533.19px;font-size:11px;line-height:11px;color:#000;letter-spacing:-0.142px;">Not Approved</span>
<span class="t" style="left:275.50px;top:533.19px;font-size:11px;line-height:11px;color:#000;">Y</span>
<span class="t" style="left:320.00px;top:533.19px;font-size:11px;line-height:11px;color:#000;">N</span>
<div class="btn" style="left:116px;top:601.2px;width:49px;height:21.3px;"></div>
<span class="t" style="left:129.50px;top:606.44px;font-size:11px;line-height:11px;color:#000;">New</span>
<div class="btn dis" style="left:171px;top:601.2px;width:46px;height:21.3px;"></div>
<span class="t" style="left:184.52px;top:606.44px;font-size:11px;line-height:11px;color:#838383;">Edit</span>
<div class="btn dis" style="left:224px;top:601.2px;width:60px;height:21.3px;"></div>
<span class="t" style="left:238.09px;top:606.44px;font-size:11px;line-height:11px;color:#838383;">Delete</span>
<div class="btn" style="left:290px;top:601.2px;width:82px;height:21.3px;"></div>
<span class="t" style="left:303.00px;top:606.44px;font-size:11px;line-height:11px;color:#000;letter-spacing:0.177px;">Copy From</span>
<div style="left:378px;top:604px;width:16px;height:16px;background:linear-gradient(#f6f6f6,#dcdcdc);border:1px solid #8a8a8a;border-radius:2px;box-sizing:border-box;"></div>
<svg class="a" style="left:380px;top:606px" width="12" height="12" viewBox="0 0 12 12"><path d="M6 .8L11 6H8.2v5H3.8V6H1z" fill="#7a7a7a" stroke="#5a5a5a" stroke-width=".5"/></svg>
<div style="left:395px;top:604px;width:16px;height:16px;background:linear-gradient(#f6f6f6,#dcdcdc);border:1px solid #8a8a8a;border-radius:2px;box-sizing:border-box;"></div>
<svg class="a" style="left:397px;top:606px" width="12" height="12" viewBox="0 0 12 12"><path d="M6 11.2L11 6H8.2V1H3.8v5H1z" fill="#7a7a7a" stroke="#5a5a5a" stroke-width=".5"/></svg>
<div style="left:11px;top:630px;width:504px;height:1px;border-top:1px dotted #fff;"></div>
<div class="btn" style="left:15px;top:636px;width:69px;height:21.5px;"></div>
<span class="t" style="left:29.00px;top:641.34px;font-size:11px;line-height:11px;color:#000;letter-spacing:-0.085px;">Used By</span>
<div class="btn" style="left:88px;top:636px;width:82px;height:21.5px;"></div>
<span class="t" style="left:102.50px;top:641.34px;font-size:11px;line-height:11px;color:#000;letter-spacing:0.045px;">Ownership</span>
<div class="btn" style="left:349px;top:636px;width:42px;height:21.5px;"></div>
<span class="t" style="left:362.05px;top:641.34px;font-size:11px;line-height:11px;color:#000;">OK</span>
<div class="btn dis" style="left:395px;top:636px;width:51px;height:21.5px;"></div>
<span class="t" style="left:407.95px;top:641.34px;font-size:11px;line-height:11px;color:#838383;">Save</span>
<div class="btn" style="left:449px;top:636px;width:62.5px;height:21.5px;"></div>
<span class="t" style="left:463.12px;top:641.34px;font-size:11px;line-height:11px;color:#000;">Cancel</span>
<div style="left:13px;top:663px;width:500px;height:1px;background:#6e6e6e;"></div>
<div style="left:13px;top:664px;width:1px;height:17px;background:#6e6e6e;"></div>
<div style="left:13px;top:681px;width:500px;height:1px;background:#fff;"></div>
<div style="left:513px;top:663px;width:1px;height:19px;background:#fff;"></div>
<span class="t" style="left:14.50px;top:665.49px;font-size:11px;line-height:11px;color:#000;letter-spacing:-0.163px;">Ready</span>
</body></html>
